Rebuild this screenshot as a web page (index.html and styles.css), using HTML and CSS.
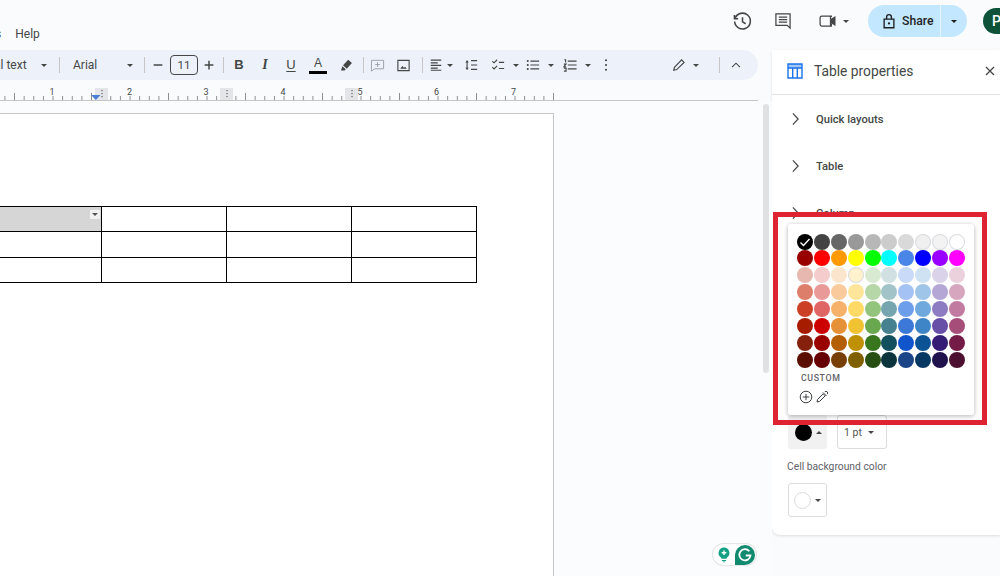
FILE: index.html
```html
<!DOCTYPE html>
<html lang="en">
<head>
<meta charset="utf-8">
<title>Table properties</title>
<link rel="stylesheet" href="styles.css">
</head>
<body>
<div class="app">
  <header class="topbar">
    <nav class="menu"><span class="menu-cut">s</span><span>Help</span></nav>
    <div class="actions">
      <svg class="ico hist" viewBox="0 0 24 24"><path d="M3.6 8.2A9 9 0 1 1 3 12" /><path d="M2.8 4.6v4.2H7" /><path d="M12 7v5.4l3.6 2.2" /></svg>
      <svg class="ico cmt" viewBox="0 0 24 24"><path d="M3.5 3.5h17v17l-3.4-3.4H3.5z" /><path d="M7 7.4h10M7 10.4h10M7 13.4h10" /></svg>
      <div class="meet">
        <svg class="ico cam" viewBox="0 0 24 24"><path d="M16 7.2V6H4.5a2 2 0 0 0-2 2v8a2 2 0 0 0 2 2H16v-3" /><path class="solid" d="M15 9.5 21 6v12l-6-3.5z" /><path d="M15 6v12" /></svg>
        <i class="caret"></i>
      </div>
      <div class="share">
        <div class="share-main">
          <svg class="lock" viewBox="0 0 24 24"><path d="M5.5 9.5h13V21h-13z" /><path d="M8.8 9.5V6.700a3.200 3.200 0 0 1 6.400 0v2.800" /><circle class="solid" cx="12" cy="15.200" r="1.500" /></svg>
          <span>Share</span>
        </div>
        <div class="share-more"><i class="caret dark"></i></div>
      </div>
      <div class="avatar">P</div>
    </div>
  </header>

  <div class="workspace">
    <main class="editor">
      <div class="toolbar">
        <span class="style-name">al text</span><i class="caret"></i>
        <b class="sep"></b>
        <span class="font-name">Arial</span><i class="caret"></i>
        <b class="sep"></b>
        <svg class="pm minus" viewBox="0 0 16 16"><path d="M3 8h10" /></svg>
        <span class="size">11</span>
        <svg class="pm plus-t" viewBox="0 0 16 16"><path d="M3 8h10M8 3v10" /></svg>
        <b class="sep"></b>
        <span class="fmt bold">B</span>
        <span class="fmt italic">I</span>
        <span class="fmt under">U</span>
        <span class="fmt color">A</span>
        <svg class="pen" viewBox="0 0 16 16"><path class="solid" d="M9.800 1.800l4 3.600-5.500 6-4-3.600z" /><path class="solid" d="M3.600 8.800l3.600 3.200-1.300 1.300-3.800-.1z" /></svg>
        <b class="sep"></b>
        <svg class="add" viewBox="0 0 16 16"><path d="M1.500 2.500h13v9h-9.500l-3.500 2.500zM8 4.500v5M5.500 7h5" /></svg>
        <svg class="img" viewBox="0 0 16 16"><path d="M2 2.500h12v11H2z" /><path class="solid" d="M4.500 11.500l2.300-3 1.700 2 1.200-1.300 1.800 2.300z" /></svg>
        <b class="sep"></b>
        <svg class="lines align" viewBox="0 0 16 16"><path d="M2 2.500h12M2 5.500h8M2 8.500h12M2 11.500h8M2 14h12" /></svg><i class="caret near"></i>
        <svg class="lines sp" viewBox="0 0 16 16"><path d="M8 3h7M8 8h7M8 13h7M3.500 3v10" /><path class="solid" d="M1.500 5l2-2.500 2 2.500zM1.500 11l2 2.500 2-2.500z" /></svg>
        <svg class="lines chk" viewBox="0 0 16 16"><path d="M1.500 3.500l2 2 3.500-3.500M1.500 10.500l2 2 3.500-3.500M9 5h6M9 12h6" /></svg><i class="caret wide"></i>
        <svg class="lines bul" viewBox="0 0 16 16"><path d="M5 3.500h10M5 8h10M5 12.500h10" /><path class="dots" d="M2 3.500h.01M2 8h.01M2 12.500h.01" /></svg><i class="caret wide"></i>
        <svg class="lines num" viewBox="0 0 16 16"><path d="M5.500 3.500h10M5.500 8h10M5.500 12.500h10M1.500 2h1.500v3M1 7h2.500L1 10h2.500M1 11.500h2.500v3.500H1" /></svg><i class="caret wide"></i>
        <svg class="more" viewBox="0 0 16 16"><path class="dots" d="M8 2.500h.01M8 8h.01M8 13.500h.01" /></svg>
        <svg class="edit" viewBox="0 0 16 16"><path d="M2 14l.8-3.400L11 2.200l2.800 2.800-8.400 8.200z" /></svg><i class="caret mid"></i>
        <b class="sep"></b>
        <svg class="up" viewBox="0 0 16 16"><path d="M3.500 10.500 8 6l4.500 4.500" /></svg>
      </div>

      <svg class="ruler" viewBox="0 0 760 20" aria-label="Ruler">
        <defs>
          <pattern id="tick" x="4.400" y="0" width="9.625" height="20" patternUnits="userSpaceOnUse"><rect x="0" y="15" width="1" height="5" fill="#8d8f94"></rect></pattern>
          <pattern id="half" x="14" y="0" width="77" height="20" patternUnits="userSpaceOnUse"><rect x="0" y="12" width="1" height="8" fill="#8d8f94"></rect></pattern>
        </defs>
        <rect x="0" y="0" width="554" height="20" fill="url(#tick)"></rect>
        <rect x="0" y="0" width="554" height="20" fill="url(#half)"></rect>
        <rect x="0" y="19" width="758" height="1" fill="#c4c7c5"></rect>
        <g class="ruler-nums">
          <text x="52" y="14">1</text>
          <text x="129.500" y="14">2</text>
          <text x="206" y="14">3</text>
          <text x="283" y="14">4</text>
          <text x="360" y="14">5</text>
          <text x="436.500" y="14">6</text>
          <text x="513.500" y="14">7</text>
        </g>
        <g class="marks">
          <rect x="95" y="7" width="13" height="12"></rect><path d="M102 9v1.200M102 12v1.200M102 15v1.200"></path>
          <rect x="220" y="7" width="13" height="12"></rect><path d="M227 9v1.200M227 12v1.200M227 15v1.200"></path>
          <rect x="345" y="7" width="13" height="12"></rect><path d="M352 9v1.200M352 12v1.200M352 15v1.200"></path>
        </g>
        <path d="M91 14h9.500l-4.700 5z" fill="#4a7fd6" stroke="none"></path>
      </svg>

      <div class="canvas">
        <section class="page">
          <table class="doc-table">
            <tr><td class="selected"><i class="cell-menu"></i></td><td></td><td></td><td></td></tr>
            <tr><td></td><td></td><td></td><td></td></tr>
            <tr><td></td><td></td><td></td><td></td></tr>
          </table>
        </section>
        <div class="scrollbar"></div>
        <div class="grammarly">
          <svg class="bulb" viewBox="0 0 18 20"><path d="M9 1a7 7 0 0 0-4.300 12.500c.8.700 1.100 1.300 1.100 2h6.400c0-.7.300-1.300 1.100-2A7 7 0 0 0 9 1z" /><path d="M6.300 17h5.400v1.200H6.300zM7.400 19h3.200v1H7.400z" /><path class="plus" d="M9 4.800v6M6 7.800h6" /></svg>
          <svg class="gmark" viewBox="0 0 20 20"><path class="g-bg" d="M10 0a10 10 0 0 1 0 20H0V10A10 10 0 0 1 10 0z" /><path class="g-g" d="M14.300 6.300A5.600 5.600 0 1 0 15.500 10.500H10.800" /></svg>
        </div>
      </div>
    </main>

    <aside class="panel">
      <div class="panel-head">
        <svg class="tbl-ico" viewBox="0 0 16 16"><path d="M1 1h14v14H1z" /><path d="M1 5h14M5.700 5v10M10.300 5v10" /><path class="top" d="M1 1h14v4H1z" /></svg>
        <h2>Table properties</h2>
        <svg class="close" viewBox="0 0 10 10"><path d="M1 1l8 8M9 1l-8 8" /></svg>
      </div>
      <div class="section"><svg class="chev" viewBox="0 0 10 16"><path d="M2 1.500 8 8l-6 6.500" /></svg><span>Quick layouts</span></div>
      <div class="section"><svg class="chev" viewBox="0 0 10 16"><path d="M2 1.500 8 8l-6 6.500" /></svg><span>Table</span></div>
      <div class="section"><svg class="chev" viewBox="0 0 10 16"><path d="M2 1.500 8 8l-6 6.500" /></svg><span>Column</span></div>
      <div class="panel-rest">
        <div class="border-row">
          <div class="btn-color active"><i class="dot black"></i><i class="caret up-caret"></i></div>
          <div class="btn-weight"><span>1 pt</span><i class="caret"></i></div>
        </div>
        <p class="cell-label">Cell background color</p>
        <div class="btn-color outlined"><i class="dot hollow"></i><i class="caret"></i></div>
      </div>
    </aside>
  </div>

  <div class="picker">
    <div class="swatches">
      <i class="sw checked" style="background:#000000"><svg viewBox="0 0 16 16"><path d="M3.500 8.500l3 3 6-6.500" /></svg></i><i class="sw" style="background:#434343"></i><i class="sw" style="background:#666666"></i><i class="sw" style="background:#999999"></i><i class="sw" style="background:#b7b7b7"></i><i class="sw" style="background:#cccccc"></i><i class="sw" style="background:#d9d9d9"></i><i class="sw edge" style="background:#efefef"></i><i class="sw edge" style="background:#f3f3f3"></i><i class="sw edge" style="background:#ffffff"></i>
      <i class="sw" style="background:#980000"></i><i class="sw" style="background:#ff0000"></i><i class="sw" style="background:#ff9900"></i><i class="sw" style="background:#ffff00"></i><i class="sw" style="background:#00ff00"></i><i class="sw" style="background:#00ffff"></i><i class="sw" style="background:#4a86e8"></i><i class="sw" style="background:#0000ff"></i><i class="sw" style="background:#9900ff"></i><i class="sw" style="background:#ff00ff"></i>
      <i class="sw" style="background:#e6b8af"></i><i class="sw" style="background:#f4cccc"></i><i class="sw" style="background:#fce5cd"></i><i class="sw edge" style="background:#fff2cc"></i><i class="sw" style="background:#d9ead3"></i><i class="sw" style="background:#d0e0e3"></i><i class="sw" style="background:#c9daf8"></i><i class="sw" style="background:#cfe2f3"></i><i class="sw" style="background:#d9d2e9"></i><i class="sw" style="background:#ead1dc"></i>
      <i class="sw" style="background:#dd7e6b"></i><i class="sw" style="background:#ea9999"></i><i class="sw" style="background:#f9cb9c"></i><i class="sw" style="background:#ffe599"></i><i class="sw" style="background:#b6d7a8"></i><i class="sw" style="background:#a2c4c9"></i><i class="sw" style="background:#a4c2f4"></i><i class="sw" style="background:#9fc5e8"></i><i class="sw" style="background:#b4a7d6"></i><i class="sw" style="background:#d5a6bd"></i>
      <i class="sw" style="background:#cc4125"></i><i class="sw" style="background:#e06666"></i><i class="sw" style="background:#f6b26b"></i><i class="sw" style="background:#ffd966"></i><i class="sw" style="background:#93c47d"></i><i class="sw" style="background:#76a5af"></i><i class="sw" style="background:#6d9eeb"></i><i class="sw" style="background:#6fa8dc"></i><i class="sw" style="background:#8e7cc3"></i><i class="sw" style="background:#c27ba0"></i>
      <i class="sw" style="background:#a61c00"></i><i class="sw" style="background:#cc0000"></i><i class="sw" style="background:#e69138"></i><i class="sw" style="background:#f1c232"></i><i class="sw" style="background:#6aa84f"></i><i class="sw" style="background:#45818e"></i><i class="sw" style="background:#3c78d8"></i><i class="sw" style="background:#3d85c6"></i><i class="sw" style="background:#674ea7"></i><i class="sw" style="background:#a64d79"></i>
      <i class="sw" style="background:#85200c"></i><i class="sw" style="background:#990000"></i><i class="sw" style="background:#b45f06"></i><i class="sw" style="background:#bf9000"></i><i class="sw" style="background:#38761d"></i><i class="sw" style="background:#134f5c"></i><i class="sw" style="background:#1155cc"></i><i class="sw" style="background:#0b5394"></i><i class="sw" style="background:#351c75"></i><i class="sw" style="background:#741b47"></i>
      <i class="sw" style="background:#5b0f00"></i><i class="sw" style="background:#660000"></i><i class="sw" style="background:#783f04"></i><i class="sw" style="background:#7f6000"></i><i class="sw" style="background:#274e13"></i><i class="sw" style="background:#0c343d"></i><i class="sw" style="background:#1c4587"></i><i class="sw" style="background:#073763"></i><i class="sw" style="background:#20124d"></i><i class="sw" style="background:#4c1130"></i>
    </div>
    <div class="custom-label">CUSTOM</div>
    <div class="custom-row">
      <svg class="add-c" viewBox="0 0 14 14"><circle cx="7" cy="7" r="5.800" /><path d="M7 3.800v6.400M3.800 7h6.400" /></svg>
      <svg class="drop" viewBox="0 0 14 14"><path d="M8.200 3.800l2 2L4.500 11.500 2 12l.5-2.500zM8 2.500l3.500 3.500M9.800 1.800a1.300 1.300 0 0 1 2.400 2.400" /></svg>
    </div>
  </div>
  <div class="annotation"></div>
</div>
</body>
</html>
```
FILE: styles.css
```css
* { box-sizing: border-box; }
html, body { margin: 0; padding: 0; }
body { width: 1000px; height: 576px; overflow: hidden; background: #f9fbfd; font-family: Roboto, "Liberation Sans", sans-serif; color: #444746; }
svg { display: block; flex: none; fill: none; stroke: #444746; stroke-width: 1.5; }
svg .solid { fill: #444746; stroke: none; }
svg .dots { stroke-width: 2.4; stroke-linecap: round; }
.app { position: relative; width: 1000px; height: 576px; overflow: hidden; display: flex; flex-direction: column; }

.topbar { height: 50px; flex: none; display: flex; justify-content: space-between; }
.menu { display: flex; gap: 14px; margin-left: -5px; padding-top: 27px; font-size: 12px; line-height: 14px; color: #444746; }
.actions { display: flex; align-items: center; height: 42px; }
.ico { width: 21px; height: 21px; }
.hist { margin-right: 20px; stroke-width: 1.8; }
.cmt { margin-right: 25px; width: 20px; height: 20px; }
.meet { display: flex; align-items: center; gap: 5px; width: 38px; }
.cam { width: 20px; height: 20px; }
.share { width: 99px; height: 32px; border-radius: 16px; background: #c2e7ff; display: flex; margin-left: 12px; color: #1f1f1f; font-size: 12.2px; font-weight: 500; }
.share-main { width: 73px; display: flex; align-items: center; padding-left: 12px; gap: 4px; border-right: 1px solid #e6f4ff; }
.lock { width: 18px; height: 18px; stroke: #1f1f1f; stroke-width: 1.8; }
.lock .solid { fill: #1f1f1f; }
.share-more { flex: 1; display: flex; align-items: center; justify-content: center; }
.avatar { width: 17px; height: 26px; margin-left: 16px; overflow: hidden; background: #0d5239; border-radius: 13px 0 0 13px; color: #fff; font-size: 14px; font-weight: 500; line-height: 26px; padding-left: 9px; }

.caret { display: block; flex: none; width: 0; height: 0; border-left: 3.5px solid transparent; border-right: 3.5px solid transparent; border-top: 3.5px solid #444746; }
.caret.dark { border-top-color: #1f1f1f; }
.caret.up-caret { border-top: 0; border-bottom: 3.5px solid #444746; }

.workspace { flex: 1; display: flex; min-height: 0; }
.editor { width: 772px; flex: none; display: flex; flex-direction: column; min-height: 0; }

.toolbar { width: 758px; height: 30px; flex: none; background: #edf2fa; border-radius: 0 15px 15px 0; display: flex; align-items: center; font-size: 12px; color: #444746; }
.toolbar > * { flex: none; }
.style-name { margin-left: -6px; width: 47px; line-height: 14px; }
.font-name { width: 54px; line-height: 14px; }
.sep { display: block; width: 1px; height: 16px; background: #c7c7c7; }
.toolbar > .sep:nth-of-type(1) { margin: 0 13px 0 12px; }
.toolbar > .sep:nth-of-type(2) { margin: 0 6px 0 11px; }
.toolbar > .sep:nth-of-type(3) { margin: 0 2px 0 7px; }
.toolbar > .sep:nth-of-type(4) { margin: 0 0 0 9px; }
.toolbar > .sep:nth-of-type(5) { margin: 0 0 0 10.5px; }
.toolbar > .sep:nth-of-type(6) { margin: 0 0 0 20px; }
.pm { width: 14px; height: 14px; stroke-width: 1.7; }
.size { width: 28px; height: 20px; border: 1px solid #444746; border-radius: 4px; text-align: center; line-height: 18px; font-size: 11.5px; margin: 0 4px 0 5px; }
.fmt { width: 26px; text-align: center; font-family: "Liberation Sans", sans-serif; font-size: 13px; line-height: 16px; color: #444746; }
.bold { font-weight: 700; }
.italic { font-family: "Liberation Serif", serif; font-style: italic; font-weight: 700; font-size: 14px; }
.under { text-decoration: underline; text-underline-offset: 2px; }
.color { width: 18px; margin-left: 5px; border-bottom: 3px solid #000; line-height: 13px; height: 17px; font-size: 12px; }
.pen { margin-left: 11.5px; width: 15px; height: 15px; }
.add { margin-left: 6.5px; width: 15px; height: 15px; stroke-width: 1; stroke: #9aa0a6; }
.img { margin-left: 11px; stroke-width: 1.2; width: 15px; height: 15px; }
.lines { width: 14px; height: 14px; stroke-width: 1.3; }
.align { margin-left: 6px; }
.near { margin-left: 4px; }
.wide { margin-left: 8px; }
.mid { margin-left: 7px; }
.sp { margin-left: 11px; }
.chk { margin-left: 13px; }
.bul { margin-left: 7px; }
.num { margin-left: 9px; }
.more { margin-left: 8px; width: 14px; height: 14px; }
.edit { margin-left: 59px; width: 14px; height: 14px; stroke-width: 1.3; }
.up { width: 14px; height: 14px; margin-left: 9px; stroke-width: 1.2; }

.ruler { width: 760px; height: 20px; margin-top: 1px; flex: none; stroke: none; overflow: visible; }
.ruler-nums text { font-family: Roboto, sans-serif; font-size: 9px; fill: #444746; stroke: none; text-anchor: middle; }
.marks rect { fill: #e3e5e8; stroke: none; }
.marks path { stroke: #444746; stroke-width: 1; fill: none; }

.canvas { flex: 1; display: flex; position: relative; min-height: 0; padding-top: 12px; background: #fbfcfe; }
.page { width: 554px; height: 500px; background: #fff; border: 1px solid #c7c7c7; border-left: 0; padding-top: 92px; flex: none; }
.doc-table { border-collapse: collapse; table-layout: fixed; width: 477px; margin-left: -1px; }
.doc-table td { border: 1px solid #000; height: 25px; padding: 0; position: relative; width: 125px; }
.doc-table tr:nth-child(2) td { height: 26px; }
.doc-table td:first-child { width: 102px; border-left: 0; }
.selected { background: #d6d6d6; }
.cell-menu { position: absolute; right: 1px; top: 3px; width: 10px; height: 9px; background: #f1f1f1; }
.cell-menu::after { content: ""; position: absolute; left: 2px; top: 3px; border-left: 3px solid transparent; border-right: 3px solid transparent; border-top: 3px solid #555; }
.scrollbar { position: absolute; left: 763px; top: 3px; width: 6px; height: 269px; border-radius: 3px; background: #dfe1e3; }
.grammarly { position: absolute; left: 713px; top: 443px; width: 43px; height: 21px; border-radius: 10.5px; background: #fff; box-shadow: 0 0 0 1px #e3e5e7; display: flex; align-items: center; padding-left: 4px; gap: 4px; }
.bulb { width: 14px; height: 17px; fill: #15a085; stroke: none; }
.bulb .plus { stroke: #fff; stroke-width: 1.8; fill: none; }
.gmark { width: 20px; height: 20px; stroke: none; }
.g-bg { fill: #118a70; stroke: none; }
.g-g { fill: none; stroke: #fff; stroke-width: 1.8; }

.panel { flex: 1; height: 485px; background: #fff; border-radius: 0 0 0 8px; box-shadow: 0 1px 3px #0000001f; display: flex; flex-direction: column; }
.panel-head { height: 45px; flex: none; border-bottom: 1px solid #e1e3e1; display: flex; align-items: center; padding: 0 0 3px 15px; color: #444746; }
.tbl-ico { width: 16px; height: 16px; stroke: #1a73e8; stroke-width: 1.4; }
.tbl-ico .top { fill: #1a73e8; fill-opacity: .4; stroke: none; }
.panel-head h2 { margin: 0 0 0 11px; font-size: 13.8px; font-weight: 400; line-height: 16px; flex: 1; }
.close { width: 10px; height: 10px; margin-right: 5px; stroke-width: 1.3; }
.section { height: 47px; flex: none; display: flex; align-items: center; padding: 1px 0 0 19px; gap: 16px; font-size: 11.2px; font-weight: 500; color: #444746; }
.chev { width: 9px; height: 14px; stroke-width: 1.4; }
.panel-rest { padding: 179px 0 0 16px; }
.border-row { display: flex; gap: 10px; }
.btn-color { width: 39px; height: 34px; display: flex; align-items: center; padding-left: 7px; gap: 4px; border-radius: 3px; }
.btn-color.active { background: #f1f1f1; }
.btn-color.outlined { border: 1px solid #dadce0; padding-left: 5px; }
.dot { display: block; flex: none; width: 17px; height: 17px; border-radius: 50%; }
.black { background: #000; }
.hollow { border: 1px solid #dadce0; background: #fff; }
.btn-weight { width: 50px; height: 34px; border: 1px solid #dadce0; border-radius: 3px; display: flex; align-items: center; gap: 6px; padding-left: 6px; font-size: 10.5px; color: #555; }
.cell-label { margin: 12px 0 10px -1px; font-size: 10.3px; line-height: 12px; color: #5f6368; }

.picker { position: absolute; left: 788px; top: 224px; width: 186px; height: 191px; background: #fff; border-radius: 3px; box-shadow: 0 1px 5px #0000004d; padding: 9.5px 0 0 9px; }
.swatches { display: grid; grid-template-columns: repeat(10, 16px); grid-auto-rows: 16px; gap: .9px; width: 170px; }
.sw { display: block; width: 16px; height: 16px; border-radius: 50%; }
.sw.edge { box-shadow: inset 0 0 0 1px #dadce0; }
.checked svg { width: 16px; height: 16px; stroke: #fff; stroke-width: 1.4; }
.custom-label { margin: 5.5px 0 0 4px; font-size: 8.8px; line-height: 10px; font-weight: 500; letter-spacing: .6px; color: #5f6368; }
.custom-row { display: flex; gap: 2px; margin: 7px 0 0 2px; }
.add-c, .drop { width: 14px; height: 14px; stroke-width: 1; stroke: #3c4043; }

.annotation { position: absolute; left: 773px; top: 212px; width: 214px; height: 213px; border: 5px solid #de2433; }
```
